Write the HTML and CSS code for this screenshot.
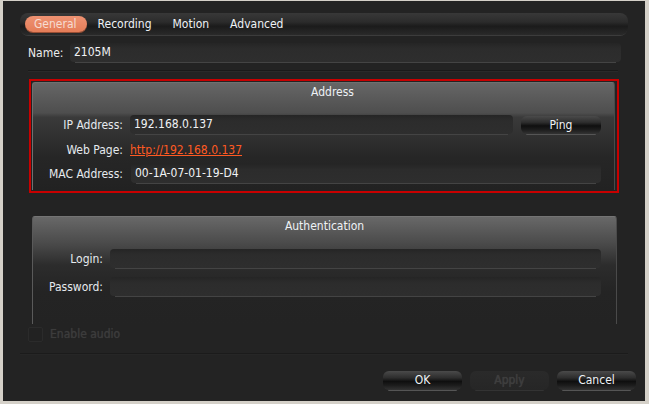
FILE: index.html
```html
<!DOCTYPE html>
<html>
<head>
<meta charset="utf-8">
<link rel="stylesheet" href="styles.css">
</head>
<body>
<div class="window">
  <div class="tabbar">
    <span class="tab active">General</span>
    <span class="tab">Recording</span>
    <span class="tab">Motion</span>
    <span class="tab">Advanced</span>
  </div>

  <div class="name-row">
    <span class="name-label">Name:</span>
    <div class="field name-field">2105M</div>
  </div>

  <div class="sep"></div>

  <div class="focus-box">
    <div class="group address">
      <div class="group-title address-title">Address</div>
      <div class="row">
        <span class="label addr-label">IP Address:</span>
        <div class="field ip-field">192.168.0.137</div>
        <div class="btn ping">Ping</div>
      </div>
      <div class="row link-row">
        <span class="label addr-label">Web Page:</span>
        <a class="link" href="#">http://192.168.0.137</a>
      </div>
      <div class="row">
        <span class="label addr-label">MAC Address:</span>
        <div class="field mac-field">00-1A-07-01-19-D4</div>
      </div>
    </div>
  </div>

  <div class="group auth">
    <div class="group-title">Authentication</div>
    <div class="row">
      <span class="label auth-label">Login:</span>
      <div class="field auth-field"></div>
    </div>
    <div class="row">
      <span class="label auth-label">Password:</span>
      <div class="field auth-field"></div>
    </div>
  </div>

  <div class="check-row">
    <span class="checkbox"></span>
    <span class="check-label">Enable audio</span>
  </div>

  <div class="sep bottom-sep"></div>

  <div class="buttons">
    <div class="btn dlg">OK</div>
    <div class="btn dlg disabled">Apply</div>
    <div class="btn dlg">Cancel</div>
  </div>
</div>
</body>
</html>
```

FILE: styles.css
```css
html, body {
  margin: 0;
  padding: 0;
}
body {
  background: #d4d0c8;
  width: 649px;
  height: 404px;
  overflow: hidden;
  font-family: "DejaVu Sans Condensed", "DejaVu Sans", sans-serif;
  font-stretch: condensed;
  font-size: 12px;
  color: #ececec;
}
.window {
  margin: 1px 4px 3px 3px;
  height: 400px;
  background: #232323;
  box-sizing: border-box;
  padding-top: 12px;
  display: flex;
  flex-direction: column;
}

/* Tabs */
.tabbar {
  margin-left: 17px;
  width: 608px;
  height: 22px;
  box-sizing: border-box;
  border-radius: 8px;
  background: linear-gradient(#383838 0%, #2c2c2c 40%, #1b1b1b 60%, #2a2a2a 100%);
  box-shadow: 0 2px 0 -1px #3c3c3c;
  display: flex;
  align-items: center;
  padding-left: 5px;
}
.tab {
  height: 16px;
  line-height: 17px;
  padding: 0 10px 0 11px;
  color: #eef2f6;
}
.tab.active {
  padding: 0 10px 0 9px;
  border-radius: 8px;
  background: linear-gradient(#ee9272, #e57d58);
  box-shadow: 0 1px 0 #9a4e34;
  color: #f6dcd2;
}

/* Name row */
.name-row {
  margin-top: 8px;
  margin-left: 25px;
  display: flex;
  align-items: center;
  height: 19px;
}
.name-label {
  width: 42px;
}
.field {
  height: 19px;
  line-height: 19px;
  box-sizing: border-box;
  border-radius: 4px;
  background: linear-gradient(#252525, #2c2c2c 30%, #2e2e2e);
  box-shadow: 0 6px 0 -5px #444;
  padding-left: 4px;
  color: #f0f2f4;
}
.name-field {
  width: 551px;
}

.sep {
  margin: 8px 0 0 25px;
  width: 590px;
  height: 0;
  border-top: 1px solid #1a1a1a;
  border-bottom: 1px solid #2a2a2a;
}

/* Address focus box */
.focus-box {
  margin: 7px 0 0 26px;
  width: 590px;
  height: 114px;
  box-sizing: border-box;
  border: 2px solid #c80000;
  padding: 1px 2px 1px 1px;
}
.group {
  border-radius: 3px 3px 0 0;
  border: 1px solid #6e6e6e;
  border-bottom: none;
  box-sizing: border-box;
}
.address {
  height: 108px;
  background: linear-gradient(#666 0%, #4e4e4e 28%, #3a3a3a 32%, #262626 70%, #222 100%);
  border-color: #707070 #4a4a4a #4a4a4a #707070;
}
.group-title {
  text-align: center;
  height: 16px;
  line-height: 16px;
  color: #eef2f6;
}
.address-title {
  padding-left: 18px;
  padding-top: 1px;
}
.row {
  display: flex;
  align-items: center;
  height: 19px;
}
.address .row:nth-child(2) {
  margin-top: 15px;
}
.link-row {
  margin-top: 6px;
}
.address .row:nth-child(4) {
  margin-top: 5px;
}
.label {
  text-align: right;
  padding-right: 7px;
  box-sizing: border-box;
  color: #e6eaee;
}
.addr-label {
  width: 97px;
}
.ip-field {
  width: 383px;
}
.mac-field {
  width: 470px;
  margin-left: 1px;
}
.link {
  color: #ff5a22;
  text-decoration: underline;
}

/* Buttons */
.btn {
  height: 18px;
  line-height: 18px;
  text-align: center;
  border-radius: 6px;
  background: linear-gradient(#4a4a4a 0%, #2e2e2e 35%, #0f0f0f 55%, #1c1c1c 75%, #333 100%);
  box-shadow: 0 6px 0 -5px #555;
  color: #eef2f6;
  box-sizing: border-box;
}
.ping {
  width: 80px;
  margin-left: 8px;
}

/* Authentication */
.auth {
  margin: 23px 0 0 29px;
  width: 585px;
  height: 108px;
  background: linear-gradient(#686868 0%, #4a4a4a 25%, #2c2c2c 45%, #242424 70%, #232323 100%);
  border-color: #747474 #4a4a4a #4a4a4a #5a5a5a;
  padding-top: 1px;
}
.auth .row:nth-child(2) {
  margin-top: 15px;
}
.auth .row:nth-child(3) {
  margin-top: 9px;
}
.auth-label {
  width: 77px;
}
.auth-field {
  width: 491px;
}

/* Checkbox */
.check-row {
  margin: 2px 0 0 25px;
  display: flex;
  align-items: center;
  height: 16px;
}
.checkbox {
  width: 15px;
  height: 15px;
  box-sizing: border-box;
  border: 1px solid #2b2b2b;
  border-radius: 2px;
  background: #222;
}
.check-label {
  margin-left: 7px;
  color: #3c3c3c;
  text-shadow: 0 0 1px #3a3a3a;
}

.bottom-sep {
  margin: 11px 0 0 17px;
  width: 608px;
  border-top: 1px solid #1b1b1b;
  border-bottom: 1px solid #262626;
}

.buttons {
  margin-top: 16px;
  display: flex;
  justify-content: flex-end;
  gap: 8px;
  padding-right: 9px;
}
.dlg {
  width: 79px;
  height: 19px;
  line-height: 19px;
}
.dlg.disabled {
  background: linear-gradient(#2a2a2a, #262626);
  box-shadow: 0 6px 0 -5px #333;
  color: #3e3e3e;
  text-shadow: 0 0 1px #444;
}
```
